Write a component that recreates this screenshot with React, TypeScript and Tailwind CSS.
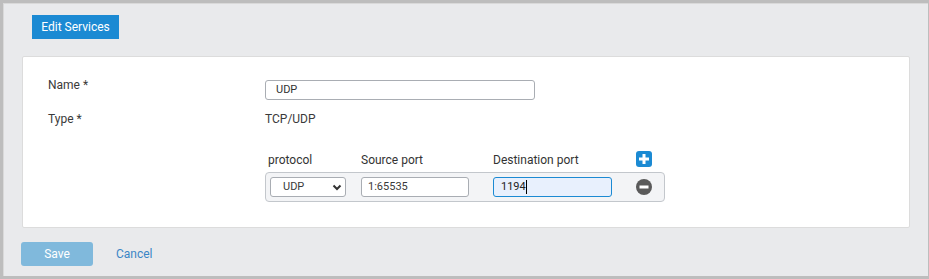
import React from "react";

export default function App() {
  return (
    <div className="w-[929px] h-[279px] bg-[#bdbdbd] pt-[3px] pl-[3px] pb-[3px] pr-[1px] font-['Roboto',sans-serif] text-[12px] text-[#3a3a3a]">
      <div className="h-full w-full bg-[#e9eaec] border-t border-l border-[#d9d9d9] flex flex-col">
        <div className="pl-[28px] pt-[11px]">
          <div className="w-[87px] h-[24px] bg-[#1b8ad3] text-white text-[12px] flex items-center justify-center">
            Edit Services
          </div>
        </div>
        <div className="ml-[18px] mt-[17px] w-[888px] h-[172px] bg-white border border-[#dcdcdc] rounded-[2px] pl-[25px] pt-[23px]">
          <div className="flex items-start">
            <div className="w-[217px] -mt-[3px] leading-[16px]">Name *</div>
            <div className="w-[270px] h-[20px] border border-[#a9adb3] rounded-[3px] pl-[10px] flex items-center text-[11px] text-[#333]">
              UDP
            </div>
          </div>
          <div className="flex items-start mt-[11px] leading-[16px]">
            <div className="w-[217px]">Type *</div>
            <div>TCP/UDP</div>
          </div>
          <div className="ml-[217px] mt-[22px] w-[400px]">
            <div className="flex items-center h-[20px] text-[12px] text-[#333]">
              <div className="w-[96px] pl-[3px] pt-[2px]">protocol</div>
              <div className="w-[132px] pt-[2px]">Source port</div>
              <div className="w-[143px] pt-[2px]">Destination port</div>
              <svg width="16" height="16" viewBox="0 0 16 16">
                <rect x="0" y="0" width="16" height="16" rx="3" fill="#1b8ad3" />
                <rect x="6.5" y="3" width="3" height="10" fill="#fff" />
                <rect x="3" y="6.5" width="10" height="3" fill="#fff" />
              </svg>
            </div>
            <div className="mt-[3px] h-[30px] bg-[#f3f4f6] border border-[#c3c7cc] rounded-[4px] pl-[4px] flex items-center">
              <div className="w-[76px] h-[20px] bg-white border border-[#a9adb3] rounded-[3px] pl-[12px] pr-[3px] flex items-center justify-between text-[11px]">
                <span>UDP</span>
                <svg width="10" height="7" viewBox="0 0 10 7">
                  <polyline points="1.5,1.5 5,5 8.5,1.5" fill="none" stroke="#333" strokeWidth="2" />
                </svg>
              </div>
              <div className="ml-[15px] w-[108px] h-[20px] bg-white border border-[#a9adb3] rounded-[3px] pl-[6px] flex items-center text-[11px]">
                1:65535
              </div>
              <div className="ml-[24px] w-[119px] h-[20px] bg-[#e8f0fd] border border-[#1b8ad3] rounded-[3px] pl-[7px] flex items-center text-[11px] text-[#222]">
                <span>1194</span>
                <span className="inline-block w-[1px] h-[14px] bg-black" />
              </div>
              <svg className="ml-[24px]" width="16" height="16" viewBox="0 0 16 16">
                <circle cx="8" cy="8" r="8" fill="#5a5a5a" />
                <rect x="3.5" y="6.5" width="9" height="3" fill="#fff" />
              </svg>
            </div>
          </div>
        </div>
        <div className="flex items-center mt-[14px] ml-[17px]">
          <div className="w-[72px] h-[24px] bg-[#80b9dc] rounded-[3px] text-white flex items-center justify-center">
            Save
          </div>
          <div className="ml-[23px] text-[#3b86c6]">Cancel</div>
        </div>
      </div>
    </div>
  );
}
